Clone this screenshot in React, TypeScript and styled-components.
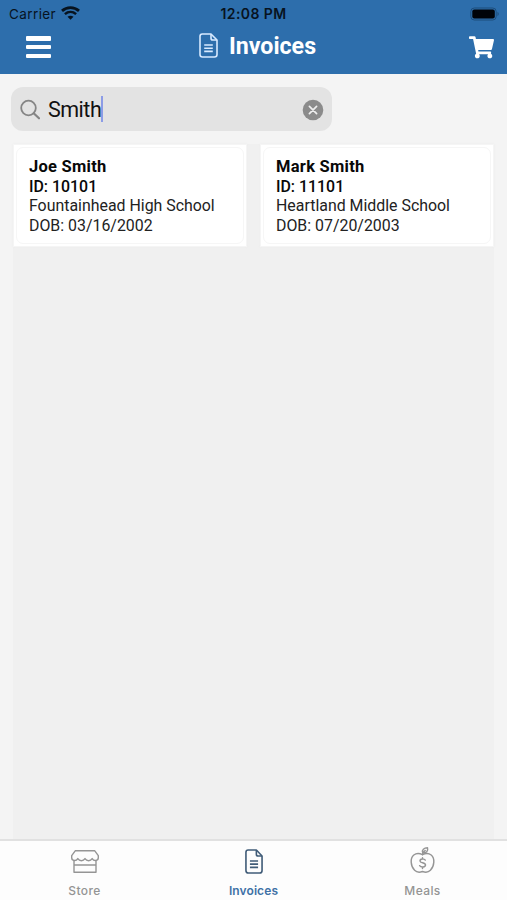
import React from "react";
import styled, { createGlobalStyle } from "styled-components";
import { FaShoppingCart } from "react-icons/fa";

const GlobalStyle = createGlobalStyle`
  * { box-sizing: border-box; }
  body { margin: 0; background: #f4f4f4; font-family: Roboto, sans-serif; }
`;

const Screen = styled.div`
  width: 507px;
  height: 900px;
  display: flex;
  flex-direction: column;
  overflow: hidden;
  background: #f4f4f4;
`;

const Header = styled.header`
  height: 74px;
  flex: none;
  background: #2d6eac;
`;

const StatusBar = styled.div`
  height: 27px;
  display: grid;
  grid-template-columns: 1fr auto 1fr;
  align-items: center;
  padding: 0 7px 0 9px;
  color: #07131f;
  font: 400 13.5px/27px Inter, sans-serif;
`;

const Carrier = styled.div`
  display: flex;
  align-items: center;
  gap: 5px;
  letter-spacing: 0.4px;
  svg { margin-top: -2px; }
`;

const Clock = styled.div`
  margin-left: -2px;
  font-size: 14px;
  line-height: 28px;
  font-weight: 600;
  letter-spacing: 0.4px;
`;

const BatterySlot = styled.div`
  display: flex;
  justify-content: flex-end;
  svg { margin-top: -1px; }
`;

const NavBar = styled.div`
  height: 47px;
  display: grid;
  grid-template-columns: 1fr auto 1fr;
  padding: 0 13px 0 26px;
  color: #fff;
`;

const MenuButton = styled.button`
  width: 25px;
  height: 22px;
  margin-top: 9px;
  padding: 0;
  border: 0;
  background: none;
  display: flex;
  flex-direction: column;
  justify-content: space-between;
`;

const MenuLine = styled.span`
  height: 4.5px;
  border-radius: 1px;
  background: #fff;
`;

const Title = styled.h1`
  margin: 0 5px 0 0;
  height: 38px;
  display: flex;
  align-items: center;
  gap: 11px;
  font-size: 23.2px;
  line-height: 38px;
  font-weight: 700;
  svg { margin-top: -2px; }
`;

const CartButton = styled.button`
  justify-self: end;
  width: 25px;
  height: 23px;
  margin-top: 9px;
  padding: 0;
  border: 0;
  background: none;
  color: #fff;
  svg { display: block; width: 25px; height: 22.5px; }
`;

const SearchField = styled.div`
  width: 321px;
  height: 44px;
  flex: none;
  margin: 13px 0 13px 11px;
  padding: 0 8px 0 9px;
  display: flex;
  align-items: center;
  border-radius: 12px;
  background: #e3e3e3;
`;

const Query = styled.span`
  margin-left: 8px;
  padding-top: 2px;
  color: #111;
  font-size: 21.5px;
  line-height: 44px;
  letter-spacing: -0.5px;
`;

const Caret = styled.span`
  width: 2px;
  height: 26px;
  background: #8c9ce6;
`;

const ClearButton = styled.button`
  margin-left: auto;
  width: 22px;
  height: 22px;
  margin-top: 1px;
  padding: 0;
  border: 0;
  background: none;
  svg { display: block; }
`;

const Results = styled.main`
  flex: 1;
  margin: 0 13px;
  display: grid;
  grid-template-columns: 1fr 1fr;
  gap: 13px;
  align-items: start;
  background: #f0f0f0;
`;

const Card = styled.article`
  height: 103px;
  padding: 2px;
  background: #fff;
  border: 1px solid #f5f5f5;
  box-shadow: 0 0 2px #ececec;
`;

const CardBody = styled.div`
  height: 97px;
  padding: 8px 0 0 12px;
  border: 1px solid #f6f6f6;
  border-radius: 7px;
`;

const Line = styled.div<{ $weight?: number; $h?: number; $size?: number; $track?: number }>`
  font-size: ${(p) => p.$size ?? 15.9}px;
  height: ${(p) => p.$h ?? 20}px;
  line-height: ${(p) => p.$h ?? 20}px;
  font-weight: ${(p) => p.$weight ?? 400};
  letter-spacing: ${(p) => p.$track ?? 0}px;
  color: ${(p) => (p.$weight ? "#080808" : "#222")};
  white-space: nowrap;
`;

const TabBar = styled.nav`
  height: 61px;
  flex: none;
  display: grid;
  grid-template-columns: repeat(3, 1fr);
  border-top: 2px solid #e1e1e1;
  background: #fdfdfd;
`;

const Tab = styled.a<{ $active?: boolean }>`
  display: flex;
  flex-direction: column;
  align-items: center;
  padding-top: 5px;
  color: ${(p) => (p.$active ? "#3f71a6" : "#949494")};
  font: ${(p) => (p.$active ? 600 : 500)} 12px/16px Inter, sans-serif;
  letter-spacing: ${(p) => (p.$active ? 0.1 : 0.4)}px;
`;

const TabIcon = styled.span`
  height: 30px;
  margin-bottom: 7px;
  display: flex;
  align-items: center;
`;

const WifiIcon = () => (
  <svg width="19" height="14" viewBox="0 0 19 14" fill="none" stroke="currentColor">
    <path d="M1 4.9C5.9.5 13.1.5 18 4.9" strokeWidth="2.8" />
    <path d="M3.9 8.1C7.2 5.2 11.8 5.2 15.1 8.1" strokeWidth="2.5" />
    <path d="M9.5 13.8 6.5 10.8C8.2 9.3 10.8 9.3 12.5 10.8Z" fill="currentColor" stroke="none" />
  </svg>
);

const BatteryIcon = () => (
  <svg width="30" height="14" viewBox="0 0 30 14">
    <rect x="0.8" y="1" width="25.4" height="12" rx="3.5" fill="none" stroke="#1d4d7b" />
    <rect x="2.3" y="2.5" width="22.5" height="9" rx="2" fill="#000308" />
    <path d="M27.5 4.8Q30 7 27.5 9.2Z" fill="#1d4d7b" />
  </svg>
);

const DocumentIcon = ({ width, height, color, stroke }: { width: number; height: number; color: string; stroke: number }) => (
  <svg width={width} height={height} viewBox="0 0 19 25" fill="none" stroke={color} strokeWidth={stroke} strokeLinejoin="round" preserveAspectRatio="none">
    <path d="M3.3 1H12L18 7V21.5Q18 24 15.5 24H3.5Q1 24 1 21.5V3.3Q1 1 3.3 1Z" />
    <path d="M12 1V5.2Q12 7 13.8 7H18" />
    <path d="M5.2 12H13.8M5.2 15.2H13.8M5.2 18.4H13.8" />
  </svg>
);

const SearchIcon = () => (
  <svg width="20" height="21" viewBox="0 0 20 21" fill="none" stroke="#858585" strokeWidth="1.8">
    <circle cx="8.5" cy="9" r="7.3" />
    <path d="m13.7 14.2 5.3 5.1" strokeWidth="2.2" strokeLinecap="round" />
  </svg>
);

const ClearIcon = () => (
  <svg width="22" height="22" viewBox="0 0 22 22">
    <circle cx="11" cy="11" r="10.3" fill="#8b8b8b" />
    <path d="m7.4 7.4 7.2 7.2m0-7.2-7.2 7.2" stroke="#eee" strokeWidth="1.7" strokeLinecap="round" />
  </svg>
);

const StoreIcon = () => (
  <svg width="30" height="30" viewBox="0 0 30 30" fill="none" stroke="#959595" strokeWidth="1.4" strokeLinejoin="round">
    <path d="M5.2 4.8H24.8L28.3 9.6V11.8Q28.3 14.3 25.6 14.5Q23.4 14.6 22.2 12.6Q20.8 14.7 18.6 14.7T15 12.6Q13.6 14.7 11.4 14.7T7.8 12.6Q6.6 14.6 4.4 14.5Q1.7 14.3 1.7 11.8V9.6Z" />
    <path d="M4 14.5V26.3H26V14.5M4 19H26" />
  </svg>
);

const MealsIcon = () => (
  <svg width="28" height="30" viewBox="0 0 28 30" fill="none" stroke="#959595" strokeWidth="1.45" strokeLinecap="round" strokeLinejoin="round">
    <path d="M13.5 8.7C10.3 7.1 7.3 7.1 4.8 9C.9 12 1.5 20.3 5.6 24.3C8 26.7 10.7 26.5 13.5 25.5C16.3 26.5 19 26.7 21.4 24.3C25.5 20.3 26.1 12 22.2 9C19.7 7.1 16.7 7.1 13.5 8.7Z" />
    <path d="M13.5 8.7 14 6.2M13.8 6.8C12.4 4 15.1 1.8 18.5 1.8C19.4 5 17.2 7.4 13.8 6.8L16.2 4.4" />
    <path d="M16.3 14.1C15 12.3 11 12.5 11 14.9C11 17.4 16.5 16.2 16.5 19.1C16.5 21.4 12.1 21.8 10.6 19.7M13.5 11.8V13.1M13.5 21.1V22.5" />
  </svg>
);

const students = [
  { name: "Joe Smith", id: "10101", school: "Fountainhead High School", dob: "03/16/2002" },
  { name: "Mark Smith", id: "11101", school: "Heartland Middle School", dob: "07/20/2003" },
];

export default function App() {
  return (
    <>
      <GlobalStyle />
      <Screen>
        <Header>
          <StatusBar>
            <Carrier>Carrier <WifiIcon /></Carrier>
            <Clock>12:08 PM</Clock>
            <BatterySlot><BatteryIcon /></BatterySlot>
          </StatusBar>
          <NavBar>
            <MenuButton aria-label="Menu"><MenuLine /><MenuLine /><MenuLine /></MenuButton>
            <Title><DocumentIcon width={19} height={25} color="#d8eaff" stroke={1.6} />Invoices</Title>
            <CartButton aria-label="Cart"><FaShoppingCart /></CartButton>
          </NavBar>
        </Header>
        <SearchField>
          <SearchIcon />
          <Query>Smith</Query>
          <Caret />
          <ClearButton aria-label="Clear"><ClearIcon /></ClearButton>
        </SearchField>
        <Results>
          {students.map((s) => (
            <Card key={s.id}>
              <CardBody>
                <Line $weight={700} $h={21} $size={16.5} $track={0.27}>{s.name}</Line>
                <Line $weight={500} $h={19}>ID: {s.id}</Line>
                <Line $h={19}>{s.school}</Line>
                <Line $h={21}>DOB: {s.dob}</Line>
              </CardBody>
            </Card>
          ))}
        </Results>
        <TabBar>
          <Tab><TabIcon><StoreIcon /></TabIcon>Store</Tab>
          <Tab $active><TabIcon><DocumentIcon width={18} height={25} color="#405c78" stroke={1.7} /></TabIcon>Invoices</Tab>
          <Tab><TabIcon><MealsIcon /></TabIcon>Meals</Tab>
        </TabBar>
      </Screen>
    </>
  );
}
